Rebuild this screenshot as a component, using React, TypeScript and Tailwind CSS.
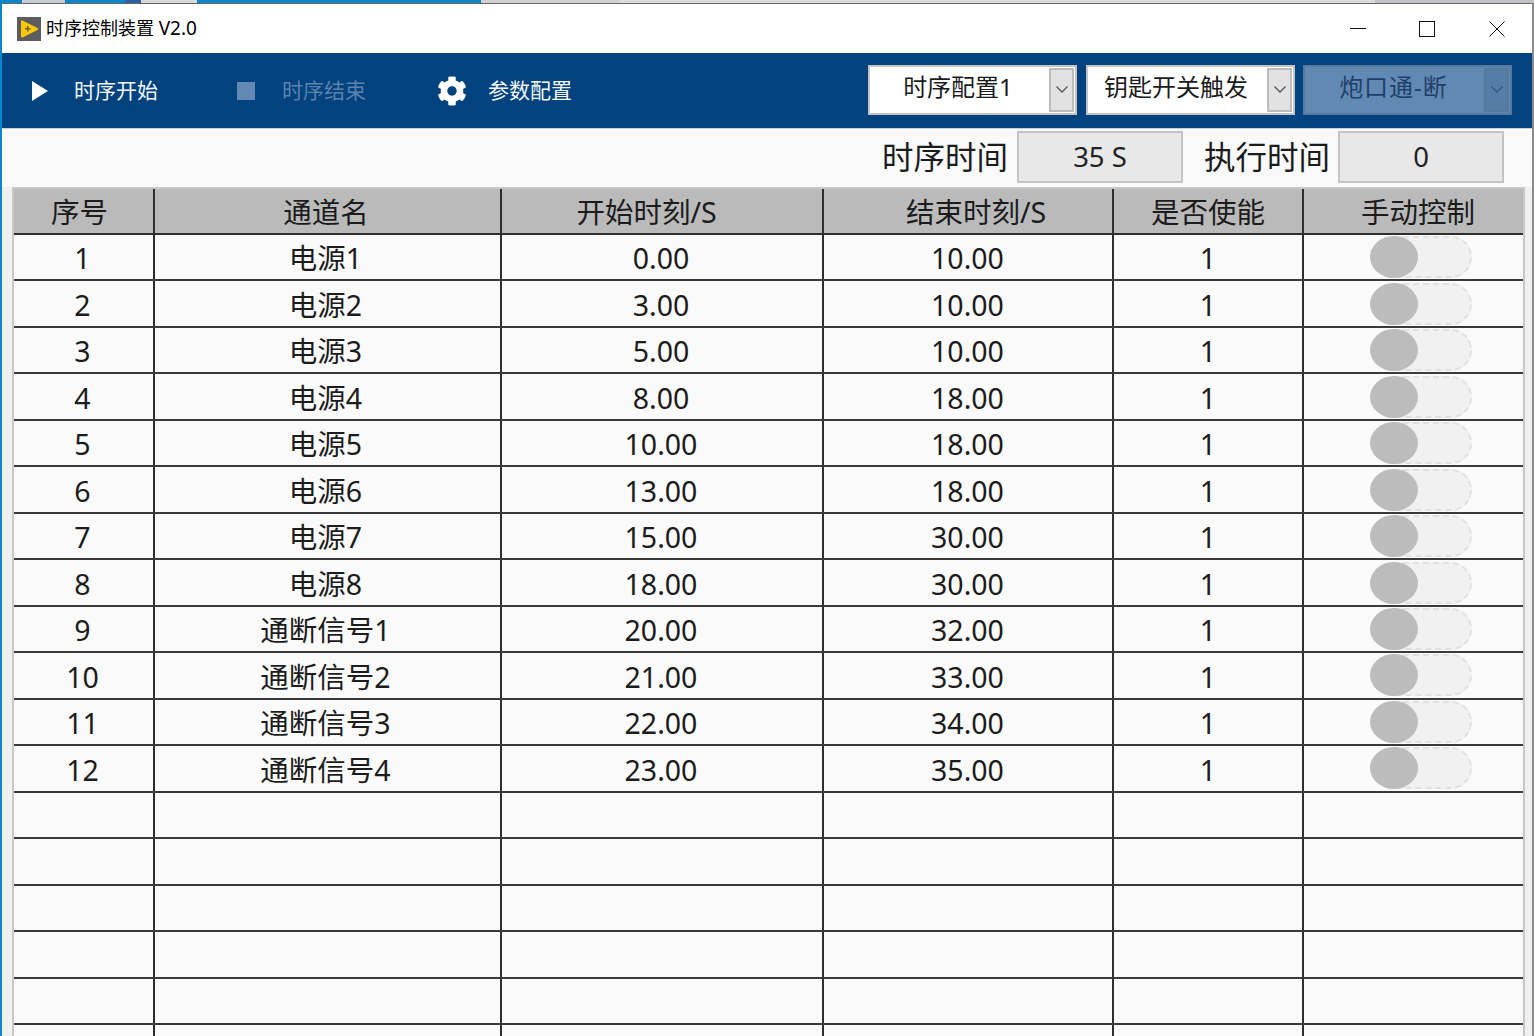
import React from 'react';
import { FaCog } from 'react-icons/fa';

const FONT = "font-['Noto_Sans','Noto_Sans_CJK_SC',sans-serif]";

const rows = [
  ['1', '电源1', '0.00', '10.00'],
  ['2', '电源2', '3.00', '10.00'],
  ['3', '电源3', '5.00', '10.00'],
  ['4', '电源4', '8.00', '18.00'],
  ['5', '电源5', '10.00', '18.00'],
  ['6', '电源6', '13.00', '18.00'],
  ['7', '电源7', '15.00', '30.00'],
  ['8', '电源8', '18.00', '30.00'],
  ['9', '通断信号1', '20.00', '32.00'],
  ['10', '通断信号2', '21.00', '33.00'],
  ['11', '通断信号3', '22.00', '34.00'],
  ['12', '通断信号4', '23.00', '35.00'],
];

// header labels are not quite centred in the reference, hence the padding
const headers = [
  ['序号', 'pr-[8px]'],
  ['通道名', 'pr-[3px]'],
  ['开始时刻/S', 'pr-[31px]'],
  ['结束时刻/S', 'pl-[16px]'],
  ['是否使能', ''],
  ['手动控制', 'pl-[9px]'],
];

const COLS = 'grid grid-cols-[141px_347px_322px_290px_190px_1fr]';

// Desktop peeking out above the window
const strip = [
  ['w-[22px]', 'bg-[#0a86cc]'],
  ['w-[43px]', 'bg-[#c9ccd0]'],
  ['w-[60px]', 'bg-[#0a86cc]'],
  ['w-[16px]', 'bg-[#2e5f9e]'],
  ['w-[56px]', 'bg-[#d9d9d9]'],
  ['w-[284px]', 'bg-[#0a86cc]'],
  ['w-[139px]', 'bg-[#d0d0d0]'],
  ['w-[755px]', 'bg-[#dcdcdc]'],
  ['flex-1', 'bg-[#c4c4c8]'],
];

function Dropdown({ label, disabled = false, className = '' }: { label: string; disabled?: boolean; className?: string }) {
  return (
    <div
      className={`flex h-[50px] w-[209px] items-center border-2 ${className} ${
        disabled ? 'border-[#55799f] bg-[#6289b1]' : 'border-[#c4c4c4] bg-white'
      }`}
    >
      <span
        className={`flex-1 pb-[5px] text-center text-[24px] leading-none ${
          disabled ? 'pr-[2px] tracking-[1px] text-[#1f3f6c]' : 'pr-[3px] text-[#1c1c1c]'
        }`}
      >
        {label}
      </span>
      <span
        className={`mr-[1px] flex h-[44px] w-[25px] items-center justify-center border-2 ${
          disabled ? 'border-[#55799f] bg-[#557da6]' : 'border-[#bcbcbc] bg-[#e2e2e2]'
        }`}
      >
        <svg width="14" height="9" viewBox="0 0 14 9" fill="none" stroke={disabled ? '#34557f' : '#555'} strokeWidth="1.3">
          <path d="M1.5 1.5 7 7l5.5-5.5" />
        </svg>
      </span>
    </div>
  );
}

function ReadOut({ value }: { value: string }) {
  return (
    <div className="flex h-[52px] w-[166px] items-center justify-center border-2 border-[#c4c4c6] bg-[#e8e8e8] text-[27.5px] leading-none text-[#222]">
      {value}
    </div>
  );
}

function Toggle() {
  return (
    <div className="relative h-[42px] w-[102px]">
      <div className="absolute inset-y-0 left-[2px] right-0 rounded-full border-2 border-dashed border-[#e0e0e0] bg-[#f1f1f1]" />
      <div className="absolute left-0 top-0 h-[42px] w-[48px] rounded-[50%] bg-[#bcbcbc]" />
    </div>
  );
}

function Cell({ children, last = false, className = '' }: { children?: React.ReactNode; last?: boolean; className?: string }) {
  return (
    <div className={`flex items-center justify-center ${last ? '' : 'border-r-2 border-[#2e2e2e]'} ${className}`}>
      {children}
    </div>
  );
}

export default function App() {
  return (
    <div className={`flex h-[1036px] w-[1534px] flex-col overflow-hidden bg-[#0a86cc] ${FONT}`}>
      <div className="flex h-[3px] shrink-0">
        {strip.map(([w, c], i) => (
          <div key={i} className={`${w} ${c}`} />
        ))}
      </div>

      <div className="ml-[2px] mr-0 flex min-h-0 flex-1 flex-col border-r-2 border-[#8a8a8a] bg-[#f0f0f0]">
        {/* Title bar */}
        <div className="flex h-[50px] shrink-0 items-center border-t border-[#666] bg-white pl-[15px]">
          <svg width="24" height="24" viewBox="0 0 24 24" className="shrink-0">
            <rect width="24" height="24" fill="#5b5b60" />
            <path d="M4 4.5 Q4 3 5.5 3.5 L20.5 11 Q22 12 20.5 13 L5.5 20.5 Q4 21 4 19.5Z" fill="#fdc800" />
            <path d="M8 11h2V9h1.5v2h2v1.5h-2v2H10v-2H8z" fill="#6b6040" />
          </svg>
          <span className="mb-[1px] ml-[5px] text-[18px] leading-none text-black">
            时序控制装置 <span className="text-[19px]">V2.0</span>
          </span>
          <div className="ml-auto flex h-full items-center">
            <svg width="16" height="16" viewBox="0 0 16 16" className="mr-[53px]" stroke="#111" fill="none">
              <path d="M0 7.5h16" />
            </svg>
            <svg width="16" height="16" viewBox="0 0 16 16" className="mr-[54px]" stroke="#111" fill="none">
              <rect x="0.5" y="0.5" width="15" height="15" />
            </svg>
            <svg width="16" height="16" viewBox="0 0 16 16" className="mr-[27px]" stroke="#111" fill="none">
              <path d="M0.5 0.5l15 15M15.5 0.5l-15 15" />
            </svg>
          </div>
        </div>

        {/* Toolbar */}
        <div className="flex h-[75px] shrink-0 items-center bg-[#01427f] pl-[30px] pr-[20px]">
          <svg width="16" height="20" viewBox="0 0 16 20" className="shrink-0">
            <path d="M0 0 16 10 0 20Z" fill="#fff" />
          </svg>
          <span className="ml-[26px] text-[21px] leading-none text-[#f4f6f9]">时序开始</span>
          <div className="ml-[79px] h-[18px] w-[18px] bg-[#6189b3]" />
          <span className="ml-[27px] text-[21px] leading-none text-[#5c83ad]">时序结束</span>
          <FaCog className="ml-[71px] shrink-0 text-[30px] text-white" />
          <span className="ml-[21px] text-[21px] leading-none text-[#f4f6f9]">参数配置</span>
          <div className="ml-auto flex pb-[2px]">
            <Dropdown label="时序配置1" />
            <Dropdown label="钥匙开关触发" className="ml-[9px]" />
            <Dropdown label="炮口通-断" className="ml-[8px]" disabled />
          </div>
        </div>

        {/* Times */}
        <div className="flex h-[59px] shrink-0 items-center justify-end border-t border-[#c8d0da] bg-[#f9f9f9] pb-[3px] pr-[28px] text-[31.5px] leading-none text-[#1c1c1c]">
          <span className="mr-[9px]">时序时间</span>
          <ReadOut value="35 S" />
          <span className="ml-[21px] mr-[8px]">执行时间</span>
          <ReadOut value="0" />
        </div>

        {/* Table */}
        <div className="ml-[10px] mr-[7px] min-h-0 flex-1 overflow-hidden border-x-2 border-t-2 border-[#c8c8cc] bg-[#fafafa] text-[28.5px] leading-none text-[#1c1c1c]">
          <div className={`${COLS} h-[46px] border-b-2 border-[#2e2e2e] bg-[#bababa]`}>
            {headers.map(([h, pad], i) => (
              <Cell key={h} last={i === headers.length - 1} className={`pt-[3px] ${pad}`}>
                {h}
              </Cell>
            ))}
          </div>
          {Array.from({ length: 18 }).map((_, i) => {
            const row = rows[i];
            return (
              <div key={i} className={`${COLS} h-[46.47px] border-b-2 border-[#3a3a3a]`}>
                <Cell className="pt-[3px] pr-[2px]">{row?.[0]}</Cell>
                <Cell className="pt-[3px] pr-[4px]">{row?.[1]}</Cell>
                <Cell className="pt-[3px] pr-[2px]">{row?.[2]}</Cell>
                <Cell className="pt-[3px] pr-[1px]">{row?.[3]}</Cell>
                <Cell className="pt-[3px]">{row ? '1' : null}</Cell>
                <Cell last className="pl-[14px]">{row ? <Toggle /> : null}</Cell>
              </div>
            );
          })}
        </div>
      </div>
    </div>
  );
}
